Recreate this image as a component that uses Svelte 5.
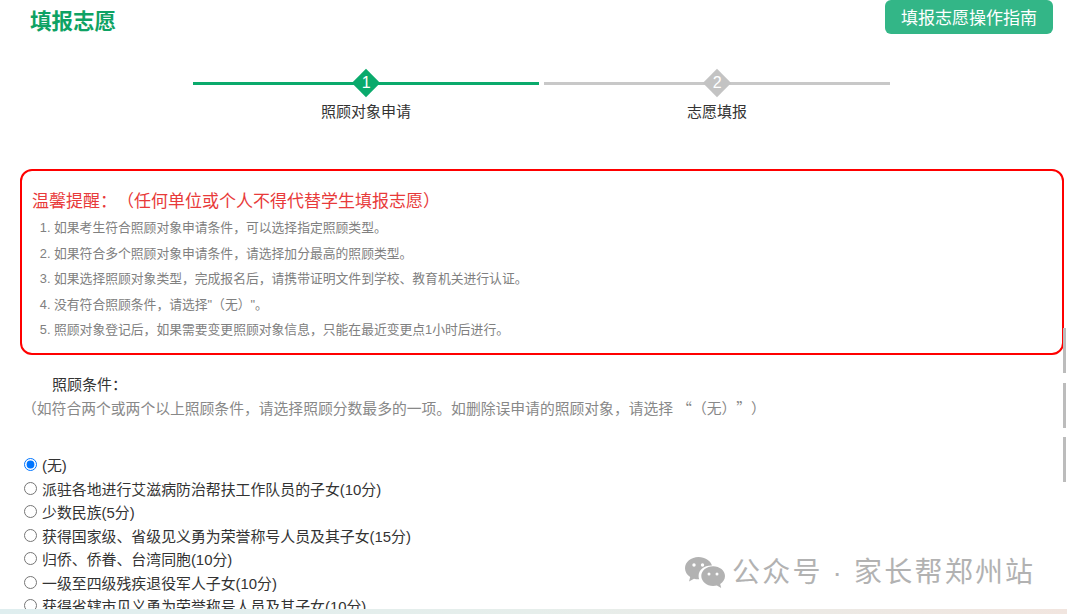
<script>
  // 照顾条件选项
  const steps = [
    { no: 1, label: "照顾对象申请", active: true },
    { no: 2, label: "志愿填报", active: false }
  ];
  const tips = [
    "如果考生符合照顾对象申请条件，可以选择指定照顾类型。",
    "如果符合多个照顾对象申请条件，请选择加分最高的照顾类型。",
    "如果选择照顾对象类型，完成报名后，请携带证明文件到学校、教育机关进行认证。",
    "没有符合照顾条件，请选择\"（无）\"。",
    "照顾对象登记后，如果需要变更照顾对象信息，只能在最近变更点1小时后进行。"
  ];
  const options = [
    "(无)",
    "派驻各地进行艾滋病防治帮扶工作队员的子女(10分)",
    "少数民族(5分)",
    "获得国家级、省级见义勇为荣誉称号人员及其子女(15分)",
    "归侨、侨眷、台湾同胞(10分)",
    "一级至四级残疾退役军人子女(10分)",
    "获得省辖市见义勇为荣誉称号人员及其子女(10分)"
  ];
  let picked = $state("(无)");
</script>

<div class="page">
  <header class="top">
    <h1>填报志愿</h1>
    <button class="guide">填报志愿操作指南</button>
  </header>

  <div class="steps">
    {#each steps as s}
      <div class="step" class:active={s.active}>
        <div class="track">
          <span class="diamond"><span>{s.no}</span></span>
        </div>
        <div class="label">{s.label}</div>
      </div>
    {/each}
  </div>

  <section class="notice">
    <h2>温馨提醒：（任何单位或个人不得代替学生填报志愿）</h2>
    <ol>
      {#each tips as t}
        <li>{t}</li>
      {/each}
    </ol>
  </section>

  <div class="cond">
    <div class="cond-title">照顾条件：</div>
    <div class="cond-hint">（如符合两个或两个以上照顾条件，请选择照顾分数最多的一项。如删除误申请的照顾对象，请选择<span class="cjk">“（无）”</span>）</div>
  </div>

  <div class="options">
    {#each options as o}
      <label class="opt">
        <input type="radio" name="care" value={o} bind:group={picked} />{o}
      </label>
    {/each}
  </div>

  <div class="scrollmarks">
    <i></i><i></i><i></i>
  </div>

  <div class="watermark">
    <svg width="42" height="34" viewBox="0 0 42 34">
      <path fill="#b2b2b2" d="M14.5 1C7 1 1 6 1 12.2c0 3.600 2 6.700 5.200 8.800L5 25.500l5-2.800c1.300.4 2.700.6 4.200.6h1c-.4-1.100-.6-2.200-.6-3.400C14.600 14.200 20 9.500 27.200 9.500h.8C26.500 4.600 21 1 14.500 1z"/>
      <path fill="#b2b2b2" d="M41 20c0-5.500-5.400-9.800-11.900-9.800S17.300 14.500 17.300 20s5.300 9.900 11.800 9.900c1.300 0 2.600-.2 3.800-.5l4.300 2.500-1-3.900C39 26.200 41 23.300 41 20z"/>
      <circle cx="10" cy="9" r="1.700" fill="#fff"/><circle cx="18.500" cy="9" r="1.700" fill="#fff"/>
      <circle cx="25" cy="18" r="1.500" fill="#fff"/><circle cx="33" cy="18" r="1.500" fill="#fff"/>
    </svg>
    <span>公众号 · 家长帮郑州站</span>
  </div>

  <div class="band"></div>
</div>

<style>
  :global(body) {
    margin: 0;
    background: #fff;
  }

  .page {
    position: relative;
    width: 1067px;
    height: 614px;
    overflow: hidden;
    font-family: "Liberation Sans", "Noto Sans CJK SC", sans-serif;
    color: #333;
    font-size: 14px;
    text-spacing-trim: space-all;
  }

  .top {
    display: flex;
    justify-content: space-between;
    align-items: flex-start;
    padding: 0 14px 0 30px;
    height: 69px;
  }

  h1 {
    margin: 8px 0 0;
    font-size: 21.500px;
    line-height: 28px;
    font-weight: 700;
    color: #0ea264;
  }

  .guide {
    width: 168px;
    height: 34px;
    border: none;
    border-radius: 6px;
    background: #33b687;
    color: #fff;
    font: inherit;
    font-size: 17px;
    padding: 0 0 2px;
  }

  .steps {
    display: flex;
    gap: 5px;
    padding-left: 193px;
  }

  .step {
    width: 346px;
    text-align: center;
  }

  .track {
    height: 28px;
    display: flex;
    align-items: center;
    justify-content: center;
    background: linear-gradient(#c8c8c8, #c8c8c8) center / 100% 3px no-repeat;
  }

  .active .track {
    background-image: linear-gradient(#0aaa6c, #0aaa6c);
  }

  .diamond {
    width: 20px;
    height: 20px;
    background: #c3c3c3;
    transform: rotate(45deg);
    display: flex;
    align-items: center;
    justify-content: center;
    color: #fff;
    font-size: 16px;
  }

  .diamond span {
    transform: rotate(-45deg);
  }

  .active .diamond {
    background: #0aaa6c;
  }

  .label {
    margin-top: 5px;
    font-size: 15px;
    line-height: 20px;
    color: #333;
  }

  .notice {
    box-sizing: border-box;
    width: 1044px;
    height: 186px;
    margin: 47px 0 0 20px;
    border: 2px solid #f00;
    border-radius: 12px;
    padding: 19px 10px 0;
  }

  h2 {
    margin: 0;
    font-size: 17px;
    line-height: 24px;
    font-weight: 400;
    color: #e83a3a;
  }

  ol {
    margin: 1px 0 0;
    padding: 0 0 0 22px;
    font-size: 12.800px;
    line-height: 25.500px;
    color: #808080;
  }

  .cond {
    margin-top: 19px;
    padding-left: 24px;
  }

  .cond-title {
    padding-left: 28px;
    font-size: 15px;
    line-height: 22px;
  }

  .cond-hint {
    margin: 1px 0 0 -2px;
    font-size: 14.800px;
    line-height: 22px;
    color: #888;
  }

  .cjk {
    margin-left: 4px;
    font-family: "Noto Sans CJK SC", sans-serif;
  }

  .options {
    margin-top: 35px;
    padding-left: 24px;
  }

  .opt {
    display: block;
    font-size: 14.900px;
    line-height: 23.500px;
    color: #333;
  }

  .opt input {
    margin: 0 5px 0 0;
    width: 13px;
    height: 13px;
  }

  .scrollmarks {
    position: absolute;
    right: 1px;
    top: 328px;
    display: flex;
    flex-direction: column;
    gap: 9.500px;
  }

  .scrollmarks i {
    display: block;
    width: 3px;
    height: 45px;
    background: #bcbcbc;
  }

  .watermark {
    position: absolute;
    left: 684px;
    top: 555px;
    display: flex;
    align-items: center;
    gap: 6px;
    color: #b2b2b2;
    font-size: 28px;
    letter-spacing: 2.200px;
    line-height: 36px;
  }

  .band {
    position: absolute;
    left: 0;
    right: 0;
    bottom: 0;
    height: 5px;
    background: linear-gradient(90deg, #dfeeef, #e6eeeb 50%, #f1e5df);
  }
</style>
